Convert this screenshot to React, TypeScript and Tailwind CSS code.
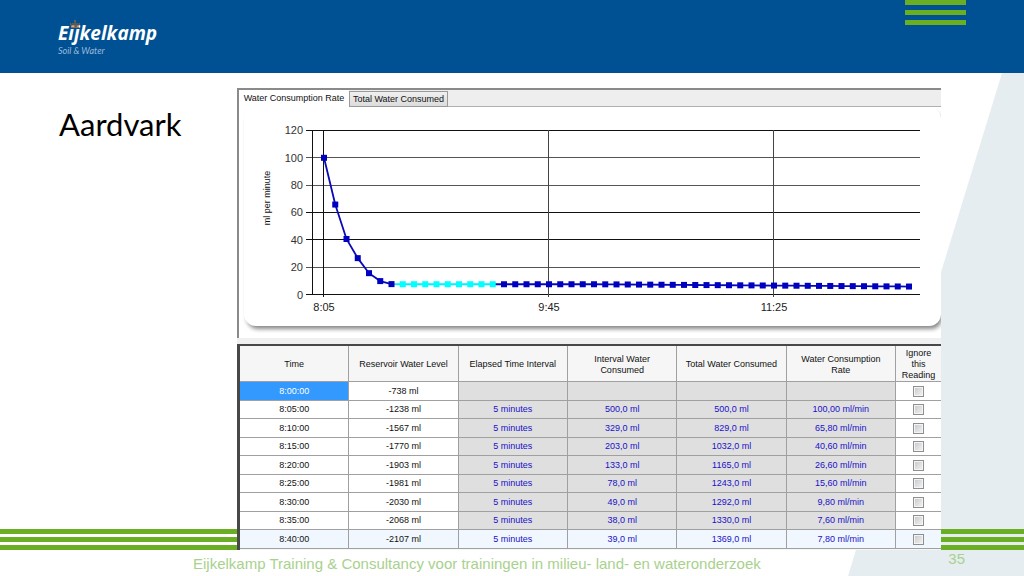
import React, { useState } from "react";

interface Reading {
  time: string;
  level: string;
  interval: string;
  consumed: string;
  total: string;
  rate: string;
}

const READINGS: Reading[] = [
  { time: "8:00:00", level: "-738 ml", interval: "", consumed: "", total: "", rate: "" },
  { time: "8:05:00", level: "-1238 ml", interval: "5 minutes", consumed: "500,0 ml", total: "500,0 ml", rate: "100,00 ml/min" },
  { time: "8:10:00", level: "-1567 ml", interval: "5 minutes", consumed: "329,0 ml", total: "829,0 ml", rate: "65,80 ml/min" },
  { time: "8:15:00", level: "-1770 ml", interval: "5 minutes", consumed: "203,0 ml", total: "1032,0 ml", rate: "40,60 ml/min" },
  { time: "8:20:00", level: "-1903 ml", interval: "5 minutes", consumed: "133,0 ml", total: "1165,0 ml", rate: "26,60 ml/min" },
  { time: "8:25:00", level: "-1981 ml", interval: "5 minutes", consumed: "78,0 ml", total: "1243,0 ml", rate: "15,60 ml/min" },
  { time: "8:30:00", level: "-2030 ml", interval: "5 minutes", consumed: "49,0 ml", total: "1292,0 ml", rate: "9,80 ml/min" },
  { time: "8:35:00", level: "-2068 ml", interval: "5 minutes", consumed: "38,0 ml", total: "1330,0 ml", rate: "7,60 ml/min" },
  { time: "8:40:00", level: "-2107 ml", interval: "5 minutes", consumed: "39,0 ml", total: "1369,0 ml", rate: "7,80 ml/min" },
];

const COLUMNS = [
  "Time",
  "Reservoir Water Level",
  "Elapsed Time Interval",
  "Interval Water Consumed",
  "Total Water Consumed",
  "Water Consumption Rate",
];

// Plot geometry, in viewBox units
const X0 = 85;
const STEP = 11.25;
const Y0 = 187.5;
const PER_ML = 1.367;

const FIRST_RATES = [100, 65.8, 40.6, 26.6, 15.6, 9.8, 7.6];
const RATES = Array.from({ length: 53 }, (_, i) => {
  if (i < FIRST_RATES.length) return FIRST_RATES[i];
  if (i < 24) return 7.5;
  return 7.5 - (i - 24) * 0.06;
});

const px = (i: number) => X0 + i * STEP;
const py = (v: number) => Y0 - v * PER_ML;
const isHighlighted = (i: number) => i >= 7 && i <= 15;

function linePoints(from: number, to: number) {
  return RATES.slice(from, to + 1)
    .map((v, k) => `${px(from + k)},${py(v)}`)
    .join(" ");
}

function RateChart() {
  return (
    <svg
      viewBox="0 0 702 219"
      className="block w-full font-['Liberation_Sans',sans-serif]"
      role="img"
      aria-label="Water Consumption Rate"
    >
      {[0, 20, 40, 60, 80, 100, 120].map((v) => (
        <g key={v}>
          <line
            x1="67"
            x2="681"
            y1={Math.floor(py(v)) + 0.5}
            y2={Math.floor(py(v)) + 0.5}
            stroke={v % 80 === 20 || v === 80 ? "#555" : "#111"}
          />
          <text x="64" y={py(v) + 4} textAnchor="end" fontSize="11" fill="#333">
            {v}
          </text>
        </g>
      ))}
      <line x1="73.5" x2="73.5" y1="23" y2="188" stroke="#111" />
      {[0, 20, 40].map((i) => (
        <line key={i} x1={Math.floor(px(i)) - 0.5} x2={Math.floor(px(i)) - 0.5} y1="23" y2="190" stroke={i === 0 ? "#111" : "#444"} />
      ))}
      {["8:05", "9:45", "11:25"].map((label, i) => (
        <text key={label} x={px(i * 20)} y="204" textAnchor="middle" fontSize="11" fill="#222">
          {label}
        </text>
      ))}
      <text transform="translate(31 91) rotate(-90)" textAnchor="middle" fontSize="9" fill="#111">
        ml per minute
      </text>

      <polyline points={linePoints(0, 6)} fill="none" stroke="#0a0ab4" strokeWidth="1.8" />
      <polyline points={linePoints(6, 15)} fill="none" stroke="#00f0ff" strokeWidth="1.8" />
      <polyline points={linePoints(15, 52)} fill="none" stroke="#0a0ab4" strokeWidth="1.8" />
      {RATES.map((v, i) => (
        <rect key={i} x={px(i) - 3} y={py(v) - 3} width="6" height="6" fill={isHighlighted(i) ? "#00ffff" : "#0000c0"} />
      ))}
    </svg>
  );
}

function ReadingsTable() {
  const [ignored, setIgnored] = useState<string[]>([]);

  const toggle = (time: string) => {
    setIgnored((prev) => (prev.includes(time) ? prev.filter((t) => t !== time) : [...prev, time]));
  };

  return (
    <table className="w-full table-fixed border-separate border-spacing-0 text-center font-['Liberation_Sans',sans-serif] text-[9px] leading-[11px] text-[#111]">
      <colgroup>
        {COLUMNS.map((c) => (
          <col key={c} />
        ))}
        <col className="w-[45px]" />
      </colgroup>
      <thead>
        <tr className="h-[36px] bg-[#f6f6f6]">
          {COLUMNS.map((c) => (
            <th key={c} scope="col" className="border-r border-b border-[#a0a0a0] px-2 pt-[2px] pb-0 font-normal">
              {c}
            </th>
          ))}
          <th scope="col" className="border-b border-[#a0a0a0] px-0 pt-[2px] pb-0 font-normal">
            Ignore<br />this<br />Reading
          </th>
        </tr>
      </thead>
      <tbody>
        {READINGS.map((r, i) => {
          const last = i === READINGS.length - 1;
          const plain = last ? "bg-[#f0f7ff]" : "bg-white";
          const computed = last ? "bg-[#f0f7ff]" : "bg-[#dfdfdf]";
          return (
            <tr key={r.time} className="odd:h-[19px] even:h-[18px]">
              <td className={`border-r border-b border-[#a0a0a0] p-0 ${i === 0 ? "bg-[#3399ff] text-white" : plain}`}>{r.time}</td>
              <td className={`border-r border-b border-[#a0a0a0] p-0 ${plain}`}>{r.level}</td>
              {[r.interval, r.consumed, r.total, r.rate].map((value, k) => (
                <td key={k} className={`border-r border-b border-[#a0a0a0] p-0 text-[#1a10c8] ${computed}`}>
                  {value}
                </td>
              ))}
              <td className={`border-b border-[#a0a0a0] p-0 ${plain}`}>
                <input
                  type="checkbox"
                  aria-label={`Ignore reading ${r.time}`}
                  checked={ignored.includes(r.time)}
                  onChange={() => toggle(r.time)}
                  className="mx-auto block size-[11px] appearance-none border border-[#8e8f8f] bg-linear-to-br from-[#c4c8cc] to-[#f4f4f4] shadow-[inset_0_0_0_1px_#f4f4f4] checked:bg-[#3399ff]"
                />
              </td>
            </tr>
          );
        })}
      </tbody>
    </table>
  );
}

function GreenStripes() {
  return (
    <div className="flex flex-col gap-[3px]" aria-hidden="true">
      <div className="h-[5px] bg-[#6aae23]" />
      <div className="h-[5px] bg-[#6aae23]" />
      <div className="h-[5px] bg-[#6aae23]" />
    </div>
  );
}

function Logo() {
  return (
    <div className="relative flex flex-col">
      <svg viewBox="0 0 10 8" className="absolute top-0 left-[12px] w-[10px]" fill="none" stroke="#a0683c" aria-hidden="true">
        <path d="M1 7.2h8" strokeWidth="1.5" />
        <path d="M1 5.2 0.6 3.2M3.2 4.8 2.8 3M5 4.8V2M6.8 4.8 7.2 3M9 5.2 9.4 3.2" strokeWidth="1" />
        <path d="M1 5.4h8M5 0v2M4 0.9h2" strokeWidth="0.8" />
      </svg>
      <span className="font-['Open_Sans',sans-serif] text-[19px] leading-[26px] font-bold text-white italic">Eijkelkamp</span>
      <span className="font-['Lato',sans-serif] text-[9px] leading-[10px] text-[#9dbbdb] italic">Soil &amp; Water</span>
    </div>
  );
}

export default function App() {
  const [tab, setTab] = useState("rate");

  return (
    <div className="relative flex min-h-screen flex-col overflow-hidden bg-white">
      {/* Slanted backdrop on the right */}
      <div className="absolute top-[73px] right-0 bottom-0 w-[176px] bg-[#e6edf1] [clip-path:polygon(154px_0,100%_0,100%_100%,0_100%)]" />

      <header className="relative flex h-[73px] justify-between bg-[#005193] px-[58px]">
        <div className="pt-[20px]">
          <Logo />
        </div>
        <div className="flex w-[61px] flex-col gap-[5px]" aria-hidden="true">
          <div className="h-[5px] bg-[#6aae23]" />
          <div className="h-[5px] bg-[#6aae23]" />
          <div className="h-[5px] bg-[#6aae23]" />
        </div>
      </header>

      <main className="relative flex">
        <div className="flex w-[237px] shrink-0 flex-col justify-between">
          <h1 className="pt-[31px] pl-[59px] font-['Lato',sans-serif] text-[31px] leading-[40px] text-black">Aardvark</h1>
          <GreenStripes />
        </div>

        <section className="mt-[15px] min-w-0 flex-1 overflow-hidden bg-[#f0f0f0]">
          <div className="border-t-2 border-l-2 border-[#8a8a8a] bg-white pb-[12px]">
            <div
              role="tablist"
              className="flex h-[17px] items-end bg-[#eee] font-['Liberation_Sans',sans-serif] text-[9px] leading-[14px] whitespace-nowrap text-[#111]"
            >
              <button
                role="tab"
                aria-selected={tab === "rate"}
                onClick={() => setTab("rate")}
                className="h-[17px] w-[110px] bg-white pb-[2px]"
              >
                Water Consumption Rate
              </button>
              <button
                role="tab"
                aria-selected={tab === "total"}
                onClick={() => setTab("total")}
                className="h-[16px] w-[99px] border border-[#9a9a9a] bg-linear-to-b from-[#f0f0f0] to-[#dcdcdc]"
              >
                Total Water Consumed
              </button>
              <div className="flex-1 border-b border-[#b0b0b0]" />
            </div>
            <div className="ml-[5px] rounded-[12px] shadow-[2px_4px_4px_-1px_#888]">
              <div className="-ml-[5px]">
                <RateChart />
              </div>
            </div>
          </div>
          <div className="mt-[6px] border-t-2 border-l-[3px] border-[#484848]">
            <ReadingsTable />
            <div className="h-px bg-[#f6f6f6]" />
          </div>
        </section>

        <div className="flex w-[83px] shrink-0 flex-col justify-end">
          <GreenStripes />
        </div>
      </main>

      <footer className="relative flex justify-between pr-[59px] pl-[193px] font-['Liberation_Sans',sans-serif] text-[15px] text-[#a9d18e]">
        <p className="pt-[5px] leading-[18px]">Eijkelkamp Training &amp; Consultancy voor trainingen in milieu- land- en wateronderzoek</p>
        <span className="leading-[18px]">35</span>
      </footer>
    </div>
  );
}
